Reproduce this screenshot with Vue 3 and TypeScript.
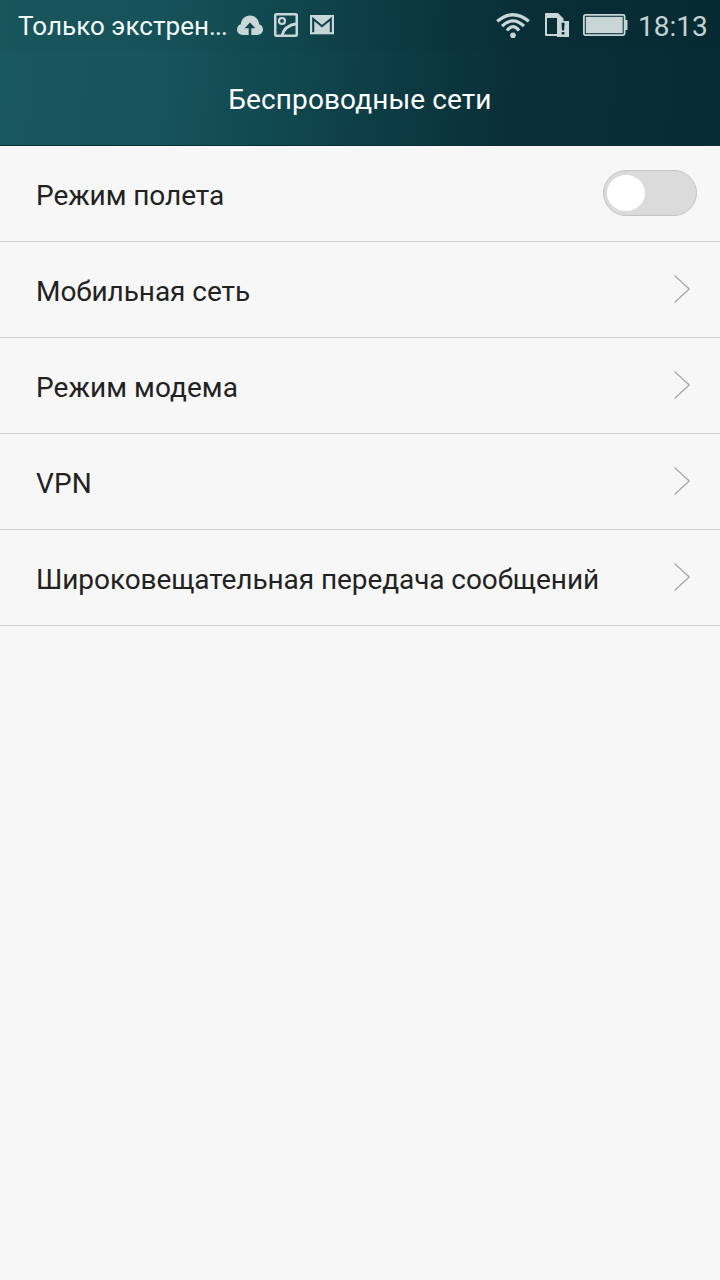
<script setup lang="ts">
import { ref } from 'vue'

interface Row {
  label: string
  kind: 'switch' | 'link'
  spacing: string
}

const airplane = ref(false)

const rows: Row[] = [
  { label: 'Режим полета', kind: 'switch', spacing: '-0.07px' },
  { label: 'Мобильная сеть', kind: 'link', spacing: '-0.06px' },
  { label: 'Режим модема', kind: 'link', spacing: '0.07px' },
  { label: 'VPN', kind: 'link', spacing: '0.1px' },
  { label: 'Широковещательная передача сообщений', kind: 'link', spacing: '-0.08px' },
]
</script>

<template>
  <div class="screen">
    <header class="top">
      <div class="status">
        <span class="carrier">Только экстрен<span class="dots">...</span></span>
        <svg class="cloud" width="28" height="24" viewBox="0 0 28 24">
          <path class="fill" d="M7 22C3.600 22 1 19.800 1 16.600C1 13.800 2.600 11.900 4.800 11.300C5.200 6.300 9 2.600 14 2.600S22.800 6.300 23.200 11.300C25.400 11.900 27 13.800 27 16.600C27 19.800 24.400 22 21 22Z" />
          <path class="dark" d="M14 9.500L19.300 15.300H15.300V22H12.700V15.300H8.700Z" />
        </svg>
        <svg class="photo" width="24" height="24" viewBox="0 0 24 24">
          <rect class="line" x="1.250" y="1.250" width="21.500" height="21.500" rx="1" stroke-width="2.500" />
          <circle class="line" cx="8" cy="8" r="3" stroke-width="2.200" />
          <path class="line" d="M8 22.500C9.500 16 14.500 12 22.500 10.700" stroke-width="3" />
        </svg>
        <svg class="mail" width="24" height="20" viewBox="0 0 24 20">
          <rect class="fill" width="24" height="19.300" />
          <path class="dark-line" d="M3.200 17.300V4L12 11.200L20.800 4V17.300" stroke-width="2.100" />
        </svg>
        <span class="spacer"></span>
        <svg class="wifi" width="36" height="26" viewBox="0 0 36 26">
          <path class="line" d="M2.200 8.300Q18 -4.800 33.800 8.300M7 13.200Q18 2.600 29 13.200M12 17.600Q18 9.600 24 17.600" stroke-width="3.200" />
          <circle class="fill" cx="18" cy="22.200" r="2.800" />
        </svg>
        <svg class="sim" width="24" height="24" viewBox="0 0 24 24">
          <path class="fill" d="M0 1Q0 0 1 0H13L18.500 5.500V8H12V5H2V21H12V23H1Q0 23 0 22Z" />
          <path class="fill" d="M12 8H24V24H12Z" />
          <path class="dark" d="M16.500 9.800H19.600L19.100 17.500H17ZM16.700 19H19.400V21.500H16.700Z" />
        </svg>
        <svg class="battery" width="45" height="22" viewBox="0 0 45 22">
          <rect class="line" x=".9" y=".9" width="40.700" height="20.200" rx="1.500" stroke-width="1.800" />
          <rect class="fill" x="2.800" y="2.800" width="36.900" height="16.400" />
          <path class="fill" d="M42 6H44.500V16H42Z" />
        </svg>
        <span class="clock">18:13</span>
      </div>
      <h1 class="title">Беспроводные сети</h1>
    </header>

    <ul class="list">
      <li v-for="row in rows" :key="row.label" class="row">
        <span class="label" :style="{ letterSpacing: row.spacing }">{{ row.label }}</span>
        <button
          v-if="row.kind === 'switch'"
          class="switch"
          :class="{ on: airplane }"
          role="switch"
          :aria-checked="airplane"
          :aria-label="row.label"
          @click="airplane = !airplane"
        >
          <span class="knob"></span>
        </button>
        <svg v-else class="chevron" width="18" height="30" viewBox="0 0 18 30">
          <path d="M1.500 1.500L16.200 15L1.500 28.500" />
        </svg>
      </li>
    </ul>
  </div>
</template>

<style>
body {
  background: #f7f7f7;
}
</style>

<style scoped>
.screen {
  width: 720px;
  height: 1280px;
  overflow: hidden;
  background: #f7f7f7;
  font-family: Roboto, 'Noto Sans', sans-serif;
  color: #222;
}
.top {
  box-sizing: border-box;
  height: 146px;
  background: linear-gradient(97deg, #19585e 0%, #17545b 22%, #124b52 36%, #0d3b43 55%, #092f38 72%, #072b34 100%);
  border-bottom: 1px solid #07313a;
}
.status {
  display: flex;
  align-items: flex-start;
  height: 50px;
  background: rgba(0, 20, 25, 0.02);
}
.status svg {
  display: block;
  flex: none;
}
.carrier {
  width: 218px;
  margin-top: 10px;
  padding-left: 18px;
  box-sizing: border-box;
  line-height: 32px;
  font-size: 26px;
  letter-spacing: 0.04px;
  white-space: nowrap;
  color: #f4fafa;
}
.dots {
  letter-spacing: -0.8px;
}
.cloud {
  margin: 13px 0 0 18px;
}
.photo {
  margin: 13px 0 0 10px;
}
.mail {
  margin: 15px 0 0 12px;
}
.spacer {
  flex: 1;
}
.wifi {
  margin-top: 13px;
}
.sim {
  margin: 13px 0 0 14px;
}
.battery {
  margin: 14px 0 0 14px;
}
.clock {
  width: 92px;
  padding-left: 10px;
  margin-top: 11px;
  box-sizing: border-box;
  line-height: 32px;
  font-size: 28px;
  white-space: nowrap;
  color: #c5d2d4;
}
.fill {
  fill: #c8d6d8;
}
.dark {
  fill: #0e444b;
}
.sim .dark {
  fill: #092f38;
}
.line {
  fill: none;
  stroke: #c8d6d8;
}
.dark-line {
  fill: none;
  stroke: #0e444b;
}
.title {
  margin: 0;
  padding-top: 1px;
  line-height: 98px;
  font-size: 28px;
  font-weight: 400;
  letter-spacing: 0.1px;
  text-align: center;
  color: #fff;
}
.list {
  list-style: none;
  margin: 0;
  padding: 0;
}
.row {
  display: flex;
  align-items: center;
  justify-content: space-between;
  box-sizing: border-box;
  height: 96px;
  padding: 0 23px 2px 36px;
  border-bottom: 1px solid #cecece;
}
.label {
  padding-top: 7px;
  font-size: 28px;
  line-height: 34px;
  white-space: nowrap;
}
.switch {
  box-sizing: border-box;
  width: 94px;
  height: 46px;
  padding: 0 3px;
  display: flex;
  align-items: center;
  border: 1px solid #c4c4c4;
  border-radius: 23px;
  background: #dbdbdb;
}
.switch.on {
  justify-content: flex-end;
  background: #17545b;
}
.knob {
  width: 38px;
  height: 36px;
  border-radius: 50%;
  background: #fff;
}
.chevron {
  margin-right: 6px;
}
.chevron path {
  fill: none;
  stroke: #aaa;
  stroke-width: 1.400;
}
</style>
